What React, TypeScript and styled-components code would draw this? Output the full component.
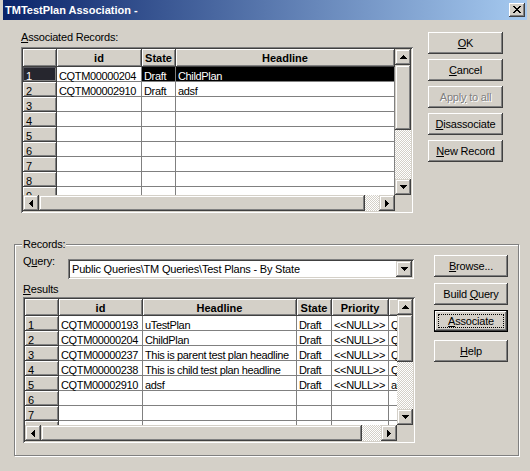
import React from "react";
import styled, { createGlobalStyle, css } from "styled-components";

const FACE = "#D4D0C8";
const SHADOW = "#808080";
const DARK = "#404040";
const HILITE = "#FFFFFF";

const GlobalStyle = createGlobalStyle`
  html, body { margin: 0; padding: 0; background: ${FACE}; }
  body { font-family: "Liberation Sans", Arial, sans-serif; font-size: 11px; color: #000; letter-spacing: -0.2px; }
  * { box-sizing: border-box; }
`;

const pushRaised = css`
  background: ${FACE};
  box-shadow: inset -1px -1px ${DARK}, inset 1px 1px ${HILITE}, inset -2px -2px ${SHADOW}, inset 2px 2px ${FACE};
`;

const scrollRaised = css`
  background: ${FACE};
  box-shadow: inset -1px -1px ${DARK}, inset 1px 1px ${FACE}, inset -2px -2px ${SHADOW}, inset 2px 2px ${HILITE};
`;

const sunken = css`
  box-shadow: inset 1px 1px ${SHADOW}, inset -1px -1px ${HILITE}, inset 2px 2px ${DARK}, inset -2px -2px ${FACE};
`;

const Window = styled.div`
  width: 530px;
  height: 471px;
  background: ${FACE};
  display: flex;
  flex-direction: column;
  overflow: hidden;
`;

const TitleBar = styled.div`
  height: 20px;
  margin: 0 3px;
  padding: 0 2px;
  display: flex;
  align-items: center;
  justify-content: space-between;
  background: linear-gradient(to right, #0a246a, #a6caf0);
`;

const Title = styled.span`
  color: #fff;
  font-weight: bold;
  font-size: 11px;
  line-height: 13px;
  letter-spacing: 0;
  white-space: nowrap;
`;

const CloseButton = styled.div`
  width: 16px;
  height: 14px;
  ${pushRaised};
  display: flex;
  align-items: center;
  justify-content: center;
  padding-bottom: 1px;
`;

const TopSection = styled.div`
  display: flex;
  align-items: flex-start;
  gap: 15px;
  padding: 11px 0 0 21px;
`;

const LeftCol = styled.div`
  width: 392px;
  display: flex;
  flex-direction: column;
`;

const Label = styled.div<{ $mt?: number; $mb?: number }>`
  line-height: 13px;
  height: 13px;
  white-space: nowrap;
  margin-top: ${(p) => p.$mt ?? 0}px;
  margin-bottom: ${(p) => p.$mb ?? 0}px;
`;

const ButtonCol = styled.div<{ $w: number; $mt: number }>`
  width: ${(p) => p.$w}px;
  margin-top: ${(p) => p.$mt}px;
  display: flex;
  flex-direction: column;
`;

const PushButton = styled.div<{ $mt?: number; $disabled?: boolean; $default?: boolean }>`
  position: relative;
  height: 22px;
  margin-top: ${(p) => p.$mt ?? 0}px;
  display: flex;
  align-items: center;
  justify-content: center;
  ${pushRaised};
  ${(p) =>
    p.$disabled &&
    css`
      color: ${SHADOW};
      text-shadow: 1px 1px 0 ${HILITE};
    `}
  ${(p) =>
    p.$default &&
    css`
      box-shadow: inset 0 0 0 1px #000, inset -2px -2px ${DARK}, inset 2px 2px ${HILITE}, inset -3px -3px ${SHADOW},
        inset 3px 3px ${FACE};
      &::after {
        content: "";
        position: absolute;
        inset: 4px;
        border: 1px dotted #000;
      }
    `}
`;

const ButtonText = styled.span`
  line-height: 13px;
  white-space: nowrap;
`;

const GroupBox = styled.fieldset`
  margin: 25px 0 0 14px;
  width: 505px;
  height: 218px;
  padding: 4px 0 0 8px;
  min-width: 0;
  border: 1px solid ${SHADOW};
  box-shadow: inset 1px 1px 0 ${HILITE}, 1px 1px 0 ${HILITE};
`;

const Legend = styled.legend`
  padding: 0 1px;
  margin-left: -1px;
  line-height: 13px;
  background: ${FACE};
`;

const GroupContent = styled.div`
  display: flex;
  align-items: flex-start;
  gap: 19px;
`;

const QueryRow = styled.div`
  display: flex;
  align-items: flex-start;
  height: 24px;
`;

const QueryLabel = styled.div`
  width: 45px;
  line-height: 13px;
`;

const Combo = styled.div`
  margin-top: 4px;
  width: 346px;
  height: 20px;
  padding: 2px;
  background: #fff;
  ${sunken};
  display: flex;
  align-items: center;
`;

const ComboText = styled.span`
  flex: 1;
  min-width: 0;
  padding-left: 2px;
  line-height: 13px;
  white-space: nowrap;
  overflow: hidden;
`;

/* ---------- Grid ---------- */

const GridFrame = styled.div<{ $w: number; $h: number; $mt?: number }>`
  width: ${(p) => p.$w}px;
  height: ${(p) => p.$h}px;
  margin-top: ${(p) => p.$mt ?? 0}px;
  padding: 2px;
  background: ${FACE};
  ${sunken};
  display: flex;
  flex-direction: column;
`;

const GridMain = styled.div`
  flex: 1;
  min-height: 0;
  display: flex;
`;

const TableArea = styled.div<{ $cols: string; $header: number }>`
  flex: 1;
  min-width: 0;
  overflow: hidden;
  display: grid;
  grid-template-columns: ${(p) => p.$cols};
  grid-template-rows: ${(p) => p.$header}px;
  grid-auto-rows: 15px;
  align-content: start;
  background: #fff;
`;

const HeadCell = styled.div`
  background: ${FACE};
  box-shadow: inset 1px 1px ${HILITE}, inset -1px -1px ${SHADOW};
  border-right: 1px solid ${DARK};
  border-bottom: 1px solid ${DARK};
  font-weight: bold;
  letter-spacing: 0;
  display: flex;
  align-items: center;
  justify-content: center;
  padding-top: 1px;
  white-space: nowrap;
  overflow: hidden;
`;

const RowHead = styled.div<{ $sel?: boolean }>`
  background: ${(p) => (p.$sel ? "#26262e" : FACE)};
  color: ${(p) => (p.$sel ? "#fff" : "#000")};
  box-shadow: inset 1px 1px ${(p) => (p.$sel ? "#55555c" : HILITE)}, inset -1px -1px ${SHADOW};
  border-right: 1px solid ${DARK};
  border-bottom: 1px solid ${DARK};
  padding: 3px 0 0 3px;
  line-height: 12px;
  white-space: nowrap;
  overflow-x: clip;
`;

const Cell = styled.div<{ $sel?: boolean }>`
  background: ${(p) => (p.$sel ? "#000" : "#fff")};
  color: ${(p) => (p.$sel ? "#fff" : "#000")};
  border-right: 1px solid ${SHADOW};
  border-bottom: 1px solid ${SHADOW};
  padding: 3px 0 0 2px;
  line-height: 12px;
  letter-spacing: -0.35px;
  white-space: nowrap;
  overflow-x: clip;
`;

const VScroll = styled.div`
  width: 16px;
  flex: none;
  display: flex;
  flex-direction: column;
`;

const GridBottom = styled.div`
  height: 16px;
  flex: none;
  display: flex;
`;

const HScroll = styled.div`
  flex: 1;
  min-width: 0;
  display: flex;
`;

const ScrollBtn = styled.div`
  width: 16px;
  height: 16px;
  flex: none;
  ${scrollRaised};
  display: flex;
  align-items: center;
  justify-content: center;
`;

const Thumb = styled.div<{ $size: number; $vertical?: boolean }>`
  flex: none;
  ${(p) => (p.$vertical ? `height: ${p.$size}px;` : `width: ${p.$size}px;`)}
  ${scrollRaised};
`;

const Track = styled.div`
  flex: 1;
  background: repeating-conic-gradient(${HILITE} 0% 25%, ${FACE} 0% 50%) 0 0 / 2px 2px;
`;

const Corner = styled.div`
  width: 16px;
  height: 16px;
  flex: none;
  background: ${FACE};
`;

type Dir = "up" | "down" | "left" | "right";
const arrowPaths: Record<Dir, { w: number; h: number; d: string }> = {
  up: { w: 7, h: 4, d: "M3 0h1v1h-1zM2 1h3v1h-3zM1 2h5v1h-5zM0 3h7v1h-7z" },
  down: { w: 7, h: 4, d: "M0 0h7v1h-7zM1 1h5v1h-5zM2 2h3v1h-3zM3 3h1v1h-1z" },
  left: { w: 4, h: 7, d: "M0 3h1v1h-1zM1 2h1v3h-1zM2 1h1v5h-1zM3 0h1v7h-1z" },
  right: { w: 4, h: 7, d: "M0 0h1v7h-1zM1 1h1v5h-1zM2 2h1v3h-1zM3 3h1v1h-1z" },
};

const Arrow = ({ dir }: { dir: Dir }) => {
  const a = arrowPaths[dir];
  return (
    <svg width={a.w} height={a.h} viewBox={`0 0 ${a.w} ${a.h}`} shapeRendering="crispEdges">
      <path d={a.d} fill="#000" />
    </svg>
  );
};

const CloseGlyph = () => (
  <svg width="8" height="7" viewBox="0 0 8 7" shapeRendering="crispEdges">
    <path
      d="M0 0h2v1h-2zM6 0h2v1h-2zM1 1h2v1h-2zM5 1h2v1h-2zM2 2h4v1h-4zM3 3h2v1h-2zM2 4h4v1h-4zM1 5h2v1h-2zM5 5h2v1h-2zM0 6h2v1h-2zM6 6h2v1h-2z"
      fill="#000"
    />
  </svg>
);

type GridProps = {
  width: number;
  height: number;
  mt?: number;
  header: number;
  rowHeadWidth: number;
  cols: { title: string; width: number }[];
  rows: string[][];
  rowCount: number;
  selectedRow?: number;
  activeCol?: number;
  vThumb: number;
  hThumb: number;
};

const DataGrid = ({
  width,
  height,
  mt,
  header,
  rowHeadWidth,
  cols,
  rows,
  rowCount,
  selectedRow,
  activeCol,
  vThumb,
  hThumb,
}: GridProps) => {
  const template = [rowHeadWidth, ...cols.map((c) => c.width)].map((w) => `${w}px`).join(" ");
  return (
    <GridFrame $w={width} $h={height} $mt={mt}>
      <GridMain>
        <TableArea $cols={template} $header={header}>
          <HeadCell />
          {cols.map((c) => (
            <HeadCell key={c.title}>{c.title}</HeadCell>
          ))}
          {Array.from({ length: rowCount }).map((_, i) => (
            <React.Fragment key={i}>
              <RowHead $sel={i === selectedRow}>{i + 1}</RowHead>
              {cols.map((c, j) => (
                <Cell key={c.title} $sel={i === selectedRow && j !== activeCol}>
                  {rows[i]?.[j] ?? ""}
                </Cell>
              ))}
            </React.Fragment>
          ))}
        </TableArea>
        <VScroll>
          <ScrollBtn>
            <Arrow dir="up" />
          </ScrollBtn>
          <Thumb $vertical $size={vThumb} />
          <Track />
          <ScrollBtn>
            <Arrow dir="down" />
          </ScrollBtn>
        </VScroll>
      </GridMain>
      <GridBottom>
        <HScroll>
          <ScrollBtn>
            <Arrow dir="left" />
          </ScrollBtn>
          <Thumb $size={hThumb} />
          <Track />
          <ScrollBtn>
            <Arrow dir="right" />
          </ScrollBtn>
        </HScroll>
        <Corner />
      </GridBottom>
    </GridFrame>
  );
};

const associated = [
  ["CQTM00000204", "Draft", "ChildPlan"],
  ["CQTM00002910", "Draft", "adsf"],
];

const results = [
  ["CQTM00000193", "uTestPlan", "Draft", "<<NULL>>", "QAdmin"],
  ["CQTM00000204", "ChildPlan", "Draft", "<<NULL>>", "QAdmin"],
  ["CQTM00000237", "This is parent test plan headline", "Draft", "<<NULL>>", "QAdmin"],
  ["CQTM00000238", "This is child test plan headline", "Draft", "<<NULL>>", "QAdmin"],
  ["CQTM00002910", "adsf", "Draft", "<<NULL>>", "admin"],
];

export default function App() {
  return (
    <>
      <GlobalStyle />
      <Window>
        <TitleBar>
          <Title>TMTestPlan Association -</Title>
          <CloseButton>
            <CloseGlyph />
          </CloseButton>
        </TitleBar>

        <TopSection>
          <LeftCol>
            <Label $mb={3}>
              <u>A</u>ssociated Records:
            </Label>
            <DataGrid
              width={392}
              height={166}
              header={18}
              rowHeadWidth={34}
              cols={[
                { title: "id", width: 85 },
                { title: "State", width: 34 },
                { title: "Headline", width: 219 },
              ]}
              rows={associated}
              rowCount={9}
              selectedRow={0}
              activeCol={0}
              vThumb={65}
              hThumb={326}
            />
          </LeftCol>
          <ButtonCol $w={75} $mt={1}>
            <PushButton>
              <ButtonText>
                <u>O</u>K
              </ButtonText>
            </PushButton>
            <PushButton $mt={5}>
              <ButtonText>
                <u>C</u>ancel
              </ButtonText>
            </PushButton>
            <PushButton $mt={5} $disabled>
              <ButtonText>
                Appl<u>y</u> to all
              </ButtonText>
            </PushButton>
            <PushButton $mt={5}>
              <ButtonText>
                <u>D</u>isassociate
              </ButtonText>
            </PushButton>
            <PushButton $mt={5}>
              <ButtonText>
                <u>N</u>ew Record
              </ButtonText>
            </PushButton>
          </ButtonCol>
        </TopSection>

        <GroupBox>
          <Legend>Records:</Legend>
          <GroupContent>
            <LeftCol>
              <QueryRow>
                <QueryLabel>
                  Q<u>u</u>ery:
                </QueryLabel>
                <Combo>
                  <ComboText>Public Queries\TM Queries\Test Plans - By State</ComboText>
                  <ScrollBtn>
                    <Arrow dir="down" />
                  </ScrollBtn>
                </Combo>
              </QueryRow>
              <Label $mt={4}>
                <u>R</u>esults
              </Label>
              <DataGrid
                width={392}
                height={146}
                mt={1}
                header={17}
                rowHeadWidth={34}
                cols={[
                  { title: "id", width: 84 },
                  { title: "Headline", width: 154 },
                  { title: "State", width: 35 },
                  { title: "Priority", width: 57 },
                  { title: "Owner", width: 60 },
                ]}
                rows={results}
                rowCount={8}
                vThumb={47}
                hThumb={321}
              />
            </LeftCol>
            <ButtonCol $w={74} $mt={0}>
              <PushButton>
                <ButtonText>
                  <u>B</u>rowse...
                </ButtonText>
              </PushButton>
              <PushButton $mt={6}>
                <ButtonText>
                  Build <u>Q</u>uery
                </ButtonText>
              </PushButton>
              <PushButton $mt={5} $default>
                <ButtonText>
                  <u>A</u>ssociate
                </ButtonText>
              </PushButton>
              <PushButton $mt={8}>
                <ButtonText>
                  <u>H</u>elp
                </ButtonText>
              </PushButton>
            </ButtonCol>
          </GroupContent>
        </GroupBox>
      </Window>
    </>
  );
}
